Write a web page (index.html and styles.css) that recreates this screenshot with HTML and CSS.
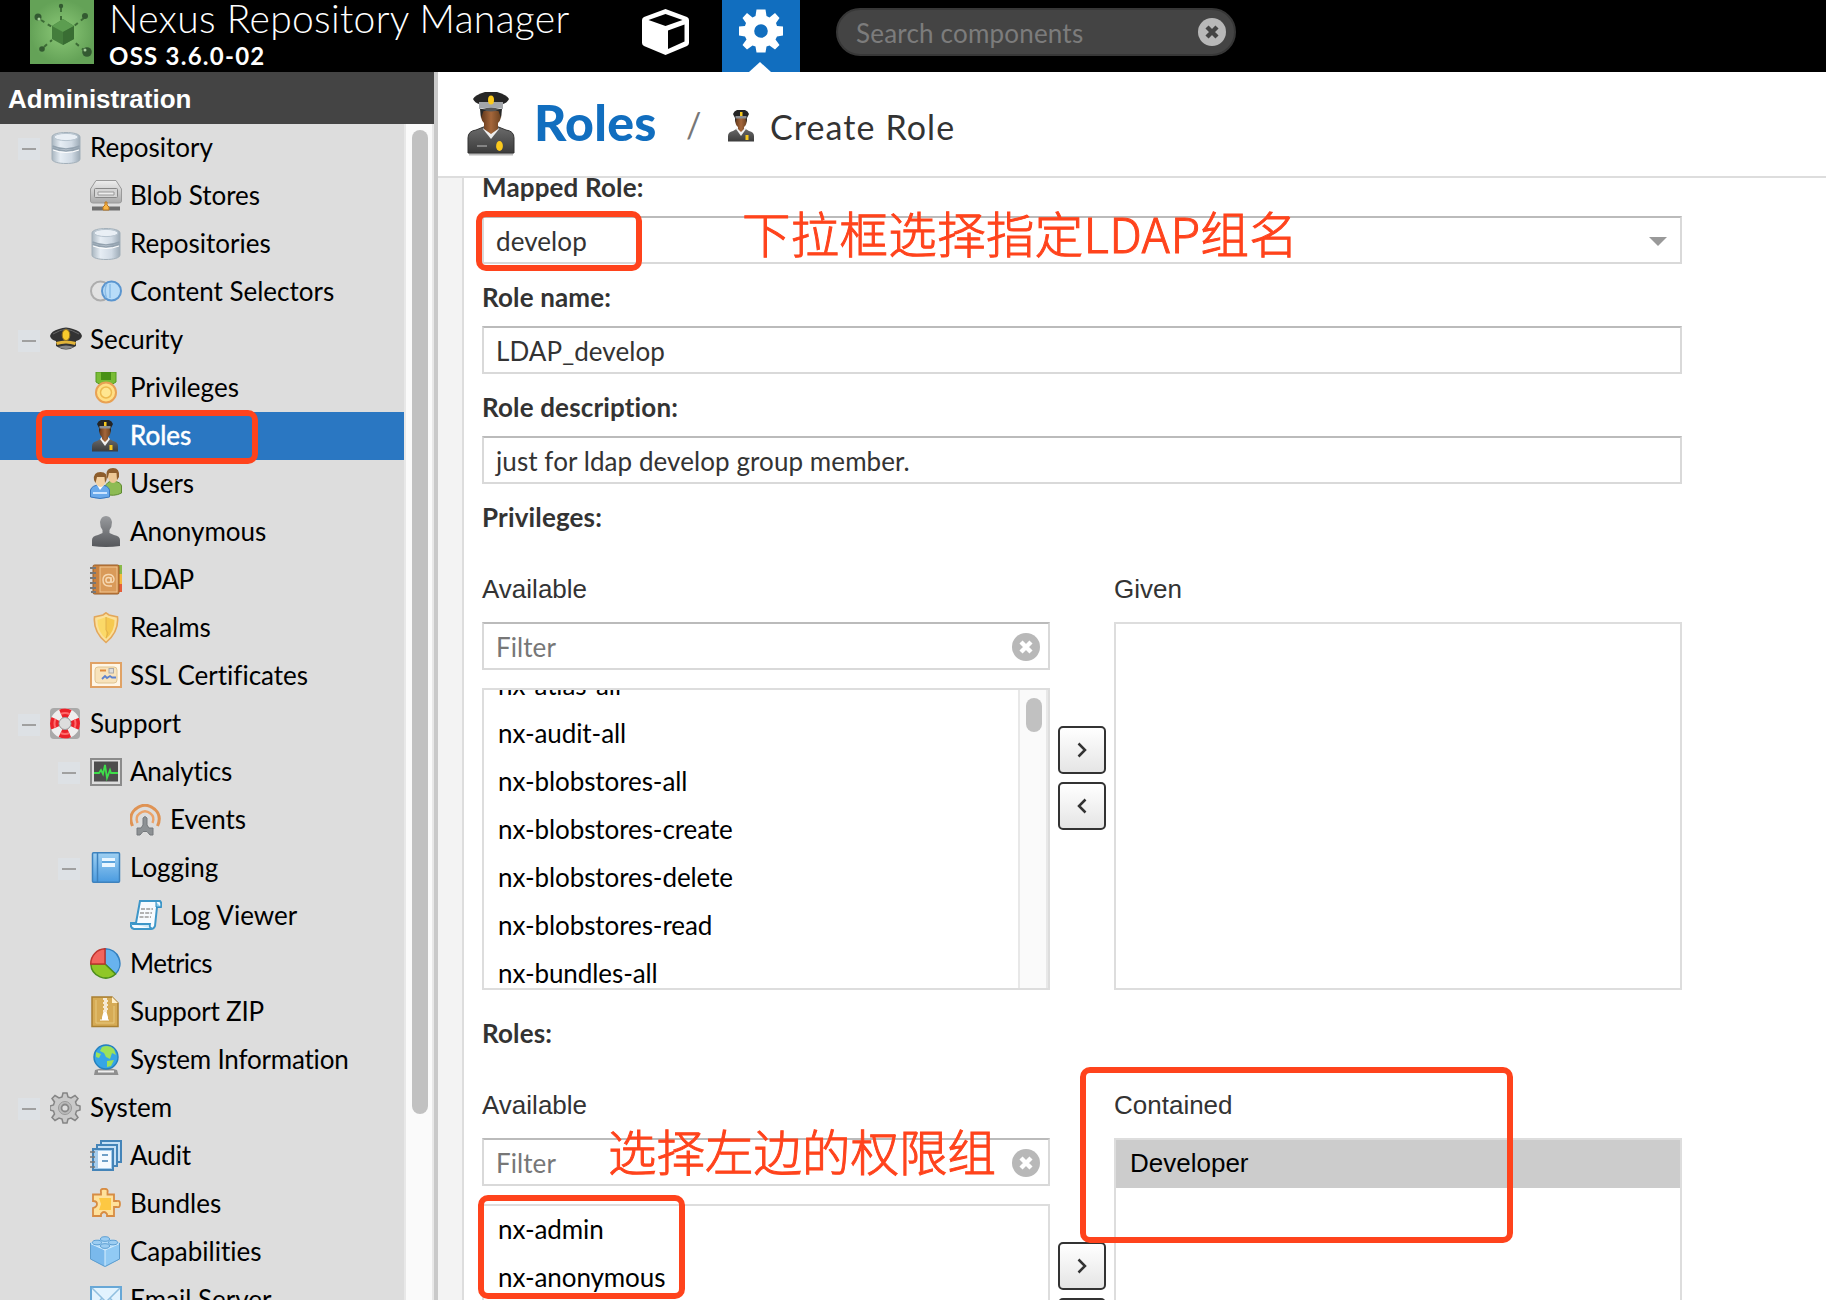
FILE: index.html
```html
<!DOCTYPE html>
<html lang="en">
<head>
<meta charset="utf-8">
<title>Nexus Repository Manager</title>
<link rel="stylesheet" href="styles.css">
</head>
<body>
<svg class="sprite" aria-hidden="true">
  <defs>
    <linearGradient id="g-steel" x1="0" x2="1"><stop offset="0" stop-color="#a9b6c0"/><stop offset=".3" stop-color="#e6edf4"/><stop offset=".7" stop-color="#d0dae4"/><stop offset="1" stop-color="#9dabb7"/></linearGradient>
    <linearGradient id="g-grey" x1="0" x2="0" y1="0" y2="1"><stop offset="0" stop-color="#eee"/><stop offset="1" stop-color="#a8a8a8"/></linearGradient>
    <linearGradient id="g-dark" x1="0" x2="0" y1="0" y2="1"><stop offset="0" stop-color="#999b9e"/><stop offset="1" stop-color="#55575b"/></linearGradient>
    <linearGradient id="g-blue" x1="0" x2="0" y1="0" y2="1"><stop offset="0" stop-color="#9fd0f2"/><stop offset="1" stop-color="#4a9be0"/></linearGradient>
    <radialGradient id="g-logo"><stop offset="0" stop-color="#8cc978"/><stop offset="1" stop-color="#64a257"/></radialGradient>
    <linearGradient id="g-skin" x1="0" x2="1"><stop offset="0" stop-color="#5e3519"/><stop offset=".5" stop-color="#a5673b"/><stop offset="1" stop-color="#68401f"/></linearGradient>
    <linearGradient id="g-coat" x1="0" x2="0" y1="0" y2="1"><stop offset="0" stop-color="#6c6c6c"/><stop offset="1" stop-color="#3c3c3c"/></linearGradient>
  </defs>
  <symbol id="i-db" viewBox="0 0 32 32">
    <path d="M2 5C2-1 30-1 30 5V27C30 33 2 33 2 27Z" fill="url(#g-steel)" stroke="#a2afb9"/>
    <path d="M2.500 14Q16 20 29.500 14M2.500 16Q16 22 29.500 16" fill="none" stroke="#93a2af" stroke-width="1.500"/>
    <path d="M3 18Q16 23 29 18" fill="none" stroke="#fff"/>
    <ellipse cx="16" cy="5" rx="12" ry="3.600" fill="#e9eff5" stroke="#b6c3ce"/>
  </symbol>
  <symbol id="i-blob" viewBox="0 0 32 32">
    <path d="M6 .5H26L31.500 9V21Q31.500 23 29 23H3Q.5 23 .5 21V9Z" fill="url(#g-grey)" stroke="#999"/>
    <rect x="4.500" y="8.500" width="23" height="9" rx="1" fill="#d5d5d5" stroke="#888"/>
    <path d="M8 12H24V15H8Z" fill="#eee" stroke="#999"/>
    <path d="M2 26.500H30V30.500H2Z" fill="#6f6f6f"/><path d="M13 30V27L15 25V22H17V25L19 27V30Z" fill="#f9b545" stroke="#b87620"/>
  </symbol>
  <symbol id="i-selectors" viewBox="0 0 32 32">
    <circle cx="10.500" cy="15" r="9.500" fill="#e2e2e2" stroke="#adadad" stroke-width="2"/>
    <circle cx="21.500" cy="15" r="9.500" fill="#b8dcf8" stroke="#5a95cf" stroke-width="2"/>
    <path d="M16.500 8Q14 15 16.500 22M20 8V22" fill="none" stroke="#8bbde7" stroke-width="1.500"/>
  </symbol>
  <symbol id="i-cap" viewBox="0 0 32 32">
    <path d="M0 12Q1 7 9 5Q16 2 23 5Q31 7 32 12Q31 16 26 17V22Q16 29 6 22V17Q1 16 0 12Z" fill="#333"/>
    <path d="M3 10Q10 6 16 5Q22 6 29 10" fill="none" stroke="#666"/>
    <path d="M6 18Q16 15 26 18L25 21Q16 18 7 21Z" fill="#e2b43a"/>
    <path d="M8 23Q16 20 24 23Q16 27 8 23Z" fill="#888"/>
    <ellipse cx="16" cy="11" rx="3.800" ry="5.500" fill="#f8cb2d" stroke="#9b761b"/>
  </symbol>
  <symbol id="i-medal" viewBox="0 0 32 32">
    <path d="M6 0H26V10L21 13H11L6 10Z" fill="#79bc35" stroke="#559920"/><path d="M11 0H21V8H11Z" fill="#489016"/>
    <circle cx="16" cy="20.500" r="10" fill="#ffdf85" stroke="#e8a153" stroke-width="2"/>
    <circle cx="16" cy="20.500" r="5.500" fill="#ffe690" stroke="#edb94f" stroke-width="1.500"/>
  </symbol>
  <symbol id="i-officer" viewBox="0 0 48 64">
    <path d="M2 62H46" stroke="#bbb" stroke-width="3"/>
    <path d="M1 61V46Q1 39 9 38L19 34H29L39 38Q47 39 47 46V61Z" fill="url(#g-coat)" stroke="#333"/>
    <path d="M16 37L24 47L32 37L28 34H20Z" fill="#eee"/>
    <path d="M14 18Q13 28 17 31V37L24 42L31 37V31Q35 28 34 18Z" fill="url(#g-skin)"/>
    <path d="M13 17H35L34 26L31.500 19H16.500L14 26Z" fill="#282828"/>
    <path d="M6 7Q8 3 18 0H30Q40 3 42 7Q40 11 36 12H12Q8 11 6 7Z" fill="#262626"/>
    <path d="M12 10H36V17Q24 14 12 17Z" fill="#a3a6aa"/><path d="M15 17Q24 14 33 17Q24 22 15 17Z" fill="#555"/>
    <ellipse cx="24" cy="8" rx="3" ry="4.500" fill="#fbc91c"/>
    <ellipse cx="32.500" cy="54" rx="3.400" ry="5" fill="#fbc91c"/><path d="M10 54H20" stroke="#999" stroke-width="1.500"/>
  </symbol>
  <symbol id="i-officer-s" viewBox="0 0 32 32">
    <path d="M2 31.500V26Q2 22 7 21L12 18H18L23 21Q28 22 28 26V31.500Z" fill="url(#g-coat)"/>
    <path d="M10 19L15 26L20 19L17 16H13Z" fill="#f1f1f1"/>
    <path d="M9 8Q9 15 12 17V19L15 22L18 19V17Q21 15 21 8Z" fill="url(#g-skin)"/>
    <path d="M7 4Q8 1 11 0H19Q22 1 23 4L21 8L20.500 13L19.500 8H10.500L9.500 13L9 8Z" fill="#242424"/>
    <path d="M9.500 6H20.500V8.500H9.500Z" fill="#8c8f93"/>
    <path d="M14 2H16.500V6H14ZM19.500 25H22.500V30H19.500Z" fill="#f5c71e"/>
  </symbol>
  <symbol id="i-users" viewBox="0 0 32 32">
    <path d="M15 26V19Q17 13 23 13Q31 14 31.500 18V25Q24 29 15 26Z" fill="#8dbb54" stroke="#5e8a2f"/>
    <ellipse cx="23" cy="8" rx="5" ry="7" fill="#eec895"/><path d="M16.500 7Q16 0 23 0Q30 0 29 9L27 12L26.500 5H19L17.500 11Z" fill="#8d5d2c"/>
    <path d="M.5 29V22Q2 17 10 17Q18 17 19.500 22V29Q10 32 .5 29Z" fill="#69a9eb" stroke="#3a77bd"/>
    <path d="M7 17L10 22L14 17Z" fill="#fff"/>
    <ellipse cx="10.500" cy="12" rx="5" ry="7" fill="#f4d2a3"/><path d="M4 12Q3 4 10.500 4Q18 4 16.500 12L15 15L14.500 9H7L5.500 15Z" fill="#8d5d2c"/>
    <path d="M3 25H17" stroke="#cce4ff" stroke-width="2"/>
  </symbol>
  <symbol id="i-anon" viewBox="0 0 32 32">
    <path d="M2 30V24Q2 20 8 19L12.500 17V14Q10 11 10 6Q11 0 16 0Q21 0 22 6Q22 11 19.500 14V17L24 19Q30 20 30 24V30Q16 32 2 30Z" fill="url(#g-dark)"/>
  </symbol>
  <symbol id="i-ldap" viewBox="0 0 32 32">
    <path d="M28 1H32V10H28Z" fill="#8aba4a"/><path d="M28 10H32V20H28Z" fill="#f4b93f"/><path d="M28 20H32V28H28Z" fill="#e65e3a"/>
    <rect x="3" y="1" width="26" height="29" rx="1.500" fill="#c98240" stroke="#985c26"/>
    <rect x="10" y="3" width="17" height="25" fill="#d99a59" stroke="#efc592"/>
    <path d="M0 4H6M0 9H6M0 14H6M0 19H6M0 24H6M1 28H6" stroke="#777" stroke-width="1.800"/>
    <circle cx="18.500" cy="16" r="2.600" fill="none" stroke="#f6d8b2" stroke-width="1.500"/>
    <path d="M21 13V18Q24 19 24 15Q23 10 18 10.500Q13 11 13 16Q13 22 19 22H22" fill="none" stroke="#f6d8b2" stroke-width="1.400"/>
  </symbol>
  <symbol id="i-shield" viewBox="0 0 32 32">
    <path d="M16 .8L19 3L27.500 5Q29 20 16 30.500Q3 20 4.500 5L13 3Z" fill="#fbe09a" stroke="#e3a75a" stroke-width="1.600"/>
    <path d="M16 5L24.500 8Q25 19 16 27Z" fill="#f6c94f"/><path d="M16 5L7.500 8Q7 19 16 27Z" fill="#fbd968"/><path d="M16 5V18L18 21L16 26" fill="none" stroke="#e0b04a"/>
  </symbol>
  <symbol id="i-cert" viewBox="0 0 32 32">
    <rect x="1" y="3" width="30" height="24" fill="#fff6e6" stroke="#e0a265" stroke-width="2"/>
    <rect x="5" y="7" width="22" height="16" rx="3" fill="#f8e3bb" stroke="#dfc492"/>
    <path d="M10 10.500H16" stroke="#e38c3e" stroke-width="2"/><rect x="19" y="8.500" width="4.500" height="4.500" fill="#ddd" stroke="#aaa"/>
    <path d="M12 19L15 16L17 18L20 16L22 17.500H26" fill="none" stroke="#5f82cd" stroke-width="1.800"/>
  </symbol>
  <symbol id="i-buoy" viewBox="0 0 32 32">
    <rect x="0" y="0" width="30" height="31" rx="4" fill="#a9a9a9"/>
    <circle cx="15" cy="15.500" r="10.500" fill="none" stroke="#eee" stroke-width="9"/>
    <circle cx="15" cy="15.500" r="10.500" fill="none" stroke="#ea2129" stroke-width="9" stroke-dasharray="9 7.490" stroke-dashoffset="4.500"/>
    <circle cx="15" cy="15.500" r="10.500" fill="none" stroke="#ff6b6b" stroke-width="2" stroke-dasharray="9 7.490" stroke-dashoffset="4.500"/>
    <circle cx="15" cy="15.500" r="6" fill="#ddd" stroke="#999"/>
  </symbol>
  <symbol id="i-monitor" viewBox="0 0 32 32">
    <rect x="1" y="3" width="30" height="26" fill="#ddd" stroke="#8b8b8b" stroke-width="2"/>
    <rect x="4" y="5.500" width="24" height="20" fill="#4d4d4d"/>
    <path d="M4 17H9L11 14L13 18L15 9L17 22L20 14L21 17H28" fill="none" stroke="#3ede4a" stroke-width="1.800"/>
  </symbol>
  <symbol id="i-antenna" viewBox="0 0 32 32">
    <path d="M2.500 22Q-2 12 5 5.500Q15-3 25 5.500Q32 12 27.500 22" fill="none" stroke="#df9354" stroke-width="3"/>
    <path d="M7.500 19Q5 13 9.500 9.500Q15 5 20.500 9.500Q25 13 22.500 19" fill="none" stroke="#eba369" stroke-width="2.400"/>
    <path d="M13 14Q15 11 17 14V21L19 24H23V31H20L17 27.500H13L10 31H7V24H11L13 21Z" fill="#8d9194" stroke="#75797c"/>
  </symbol>
  <symbol id="i-book" viewBox="0 0 32 32">
    <rect x="2.500" y=".8" width="27" height="29.500" rx="1" fill="url(#g-blue)" stroke="#3e82bd" stroke-width="1.500"/>
    <path d="M7.500 1V30" stroke="#3e82bd" stroke-width="1.500"/>
    <rect x="12" y="6" width="13" height="9" fill="#eaf6ff"/><path d="M12 10H25" stroke="#5da4dc" stroke-width="2"/>
  </symbol>
  <symbol id="i-scroll" viewBox="0 0 32 32">
    <path d="M10 1H30Q32 3 31 7H27L25 26Q24 29 21 29H4Q0 28 1 23H6Z" fill="#f7fbff" stroke="#3d96c8" stroke-width="2"/>
    <path d="M2 24H20Q19 28 22 28.500" fill="#cfeaf8" stroke="#3d96c8" stroke-width="1.800"/><path d="M26 2V7H31" fill="#8fd0f1" stroke="#2f88bb"/>
    <path d="M11 9H23M10 13H22M9.500 17H21" stroke="#9b9b9b" stroke-width="1.600" stroke-dasharray="4 1.200"/>
  </symbol>
  <symbol id="i-pie" viewBox="0 0 32 32">
    <path d="M15 16V.8A14.700 14.700 0 0 1 25.500 26Z" fill="#68b3ee" stroke="#317fbf" stroke-width="1.500"/>
    <path d="M15 16L25.500 26A14.700 14.700 0 0 1 .8 16Z" fill="#8fc727" stroke="#4c8d1c" stroke-width="1.500"/>
    <path d="M15 16H.8A14.700 14.700 0 0 1 15 .8Z" fill="#f2655e" stroke="#bd352e" stroke-width="1.500"/>
  </symbol>
  <symbol id="i-zip" viewBox="0 0 32 32">
    <path d="M2 1H22L28 7V30.500H2Z" fill="#d6ab55" stroke="#a97f30" stroke-width="1.500"/><path d="M22 1V7H28Z" fill="#fff0ca"/>
    <path d="M6 4V27H24V10" fill="none" stroke="#e6c87e"/>
    <path d="M13 3H17M14 5H18M13 7H17M14 9H18M13 11H17M14 13H18M13 15H17" stroke="#fff" stroke-width="1.500"/><path d="M13.500 16H16.500L18 21V24H12V21Z" fill="#fff"/><path d="M10 24H19" stroke="#fff"/>
  </symbol>
  <symbol id="i-globe" viewBox="0 0 32 32">
    <path d="M5 26Q16 22 27 26L28.500 31H4Z" fill="#8f8f8f"/><path d="M8 27.500H24" stroke="#eee" stroke-width="2"/>
    <circle cx="16" cy="13" r="12" fill="#36a5e6" stroke="#2580bd" stroke-width="1.400"/>
    <path d="M12 3Q19 0 24 5L26 11L22 9L20 15L16 13L14 9L10 7ZM17 17L24 16L21 22L17 23ZM6 8L11 10L9 14L6 13Z" fill="#9de158"/>
  </symbol>
  <symbol id="i-gear" viewBox="0 0 32 32">
    <path d="M13 1H17L18 5L21 6L25 3.500L28 6.500L25.500 10L26.500 13L30 14V18L26.500 19L25.500 22L28 25.500L25 28.500L21 26L18 27L17 31H13L12 27L9 26L5 28.500L2 25.500L4.500 22L3.500 19L0 18V14L3.500 13L4.500 10L2 6.500L5 3.500L9 6L12 5Z" fill="#c9c9c9" stroke="#858585" stroke-width="1.500"/>
    <circle cx="15" cy="16" r="6.500" fill="#bbb" stroke="#999"/><circle cx="15" cy="16" r="3.500" fill="#ddd" stroke="#888" stroke-width="1.800"/>
  </symbol>
  <symbol id="i-audit" viewBox="0 0 32 32">
    <path d="M11 1H31V22H11Z" fill="#c6e0f5" stroke="#4484b8" stroke-width="2"/>
    <path d="M7 5H27V26H7Z" fill="#c6e0f5" stroke="#4484b8" stroke-width="2"/>
    <path d="M3 9H23V30H3Z" fill="#a5ccec" stroke="#4484b8" stroke-width="2"/>
    <path d="M8 11H21V28H8Z" fill="#f5faff"/><path d="M12 15H18M12 21H18" stroke="#6f9fc7" stroke-width="2"/>
    <path d="M0 12H5M0 17H5M0 22H5M0 27H5" stroke="#777" stroke-width="1.600"/>
  </symbol>
  <symbol id="i-puzzle" viewBox="0 0 32 32">
    <path d="M3 6.500H11V4Q10 .8 14 .8Q18.500 .8 17.500 4V6.500H24V13H27Q30 12 30 16Q30 20 27 19H24V28H17V26Q14 22 11 26V28H3V20Q7 19 7 16Q7 13 3 13Z" fill="#ffe19b" stroke="#d78c43" stroke-width="1.800"/>
    <path d="M9 10H21V22H9L11 16Z" fill="#fdc843"/>
  </symbol>
  <symbol id="i-brick" viewBox="0 0 32 32">
    <path d="M0 7L15 2L30 7V23L15 31L0 23Z" fill="#7ab9ec"/><path d="M15 14L30 7V23L15 31Z" fill="#91caf4"/><path d="M0 7L15 1L30 7L15 14Z" fill="#b4dcf9"/>
    <path d="M15 14V31M.5 7.500L15 14L29.500 7.500" fill="none" stroke="#d6edfd"/><path d="M.5 7V23L15 30.500L29.500 23V7" fill="none" stroke="#5f9dcd"/>
    <g fill="#9ccdf2" stroke="#5d9fd3"><ellipse cx="15" cy="3" rx="4.500" ry="2.300"/><ellipse cx="7" cy="6.500" rx="4.500" ry="2.300"/><ellipse cx="23" cy="6.500" rx="4.500" ry="2.300"/><ellipse cx="15" cy="10" rx="4.500" ry="2.300"/></g>
  </symbol>
  <symbol id="i-mail" viewBox="0 0 32 32">
    <rect x="1" y="3" width="30" height="24" fill="#e2f3fe" stroke="#67a7d6" stroke-width="2"/><path d="M2 4L16 18L30 4M2 26L12 14M30 26L20 14" fill="none" stroke="#91bfdf" stroke-width="1.500"/>
  </symbol>
  <symbol id="i-clear" viewBox="0 0 28 28">
    <circle cx="14" cy="14" r="14" fill="currentColor"/><path d="M9 9L19 19M19 9L9 19" stroke="var(--cross)" stroke-width="4.400"/>
  </symbol>
</svg>

<div class="app">
  <header class="topbar">
    <svg class="logo" viewBox="0 0 64 64"><rect width="64" height="64" fill="url(#g-logo)"/>
      <path d="M31 8V20M11 20L22 27M54 18L43 27M14 47L22 40M55 51L43 41" stroke="#3d6c36" stroke-width="2" stroke-dasharray="4 4"/>
      <path d="M33 19L44 26V39L33 45L22 39V26Z" fill="#447d3c"/><path d="M33 19L44 26L33 32L22 26Z" fill="#5c9d50"/><path d="M33 32L44 26V39L33 45Z" fill="#396d33"/>
      <g fill="#335a31"><circle cx="8" cy="17" r="3.500"/><circle cx="55" cy="16" r="3"/><circle cx="12" cy="49" r="2.800"/><circle cx="57" cy="52" r="4.800"/><circle cx="31" cy="6" r="2.200"/></g>
      <g fill="#a7cf9c"><circle cx="9" cy="19" r="1.500"/><circle cx="55" cy="50" r="1.500"/></g>
    </svg>
    <div class="brand"><div class="brand-name">Nexus Repository Manager</div><div class="brand-version">OSS 3.6.0-02</div></div>
    <a class="mode"><svg class="mode-cube" viewBox="0 0 47 46"><path d="M23.500 0L45 8Q47 9 47 11V34Q47 36 45 37L23.500 46L2 37Q0 36 0 34V11Q0 9 2 8Z" fill="#fff"/><path d="M6.500 11L23.500 5L40.500 11L23.500 17Z" fill="#000"/><path d="M26 21.500L42.500 15.500V32.500L26 40Z" fill="#000"/></svg></a>
    <a class="mode mode-active"><svg class="mode-gear" viewBox="-22 -22 44 44"><path fill="#fff" fill-rule="evenodd" d="M-4.500-21.500H4.500L5.500-15L8.500-13.500L14-18L18.500-13L15-8L16-5L22-4.500V4.500L16 5.500L14.500 8.500L18.500 14L14 18.500L8.500 14.500L5.500 15.500L4.500 21.500H-4.500L-5.500 15.500L-8.500 14.500L-14 18.500L-18.500 14L-14.500 8.500L-16 5.500L-22 4.500V-4.500L-16-5L-15-8L-18.500-13L-14-18L-8.500-13.500L-5.500-15ZM0-6.800A6.800 6.800 0 1 0 0 6.800A6.800 6.800 0 1 0 0-6.800Z"/></svg></a>
    <div class="search"><span>Search components</span><svg class="clear"><use href="#i-clear"/></svg></div>
  </header>

  <div class="body">
    <aside class="sidebar">
      <div class="sidebar-title">Administration</div>
      <div class="sidebar-main">
        <nav class="tree">
          <div class="node"><i class="toggle"></i><svg><use href="#i-db"/></svg><span>Repository</span></div>
          <div class="node l2"><svg><use href="#i-blob"/></svg><span>Blob Stores</span></div>
          <div class="node l2"><svg><use href="#i-db"/></svg><span>Repositories</span></div>
          <div class="node l2"><svg><use href="#i-selectors"/></svg><span>Content Selectors</span></div>
          <div class="node"><i class="toggle"></i><svg><use href="#i-cap"/></svg><span>Security</span></div>
          <div class="node l2"><svg><use href="#i-medal"/></svg><span>Privileges</span></div>
          <div class="node l2 selected"><svg><use href="#i-officer-s"/></svg><span>Roles</span></div>
          <div class="node l2"><svg><use href="#i-users"/></svg><span>Users</span></div>
          <div class="node l2"><svg><use href="#i-anon"/></svg><span>Anonymous</span></div>
          <div class="node l2"><svg><use href="#i-ldap"/></svg><span class="tighter">LDAP</span></div>
          <div class="node l2"><svg><use href="#i-shield"/></svg><span>Realms</span></div>
          <div class="node l2"><svg><use href="#i-cert"/></svg><span>SSL Certificates</span></div>
          <div class="node"><i class="toggle"></i><svg><use href="#i-buoy"/></svg><span>Support</span></div>
          <div class="node l2"><i class="toggle"></i><svg><use href="#i-monitor"/></svg><span class="tight">Analytics</span></div>
          <div class="node l3"><svg><use href="#i-antenna"/></svg><span>Events</span></div>
          <div class="node l2"><i class="toggle"></i><svg><use href="#i-book"/></svg><span>Logging</span></div>
          <div class="node l3"><svg><use href="#i-scroll"/></svg><span>Log Viewer</span></div>
          <div class="node l2"><svg><use href="#i-pie"/></svg><span class="tighter">Metrics</span></div>
          <div class="node l2"><svg><use href="#i-zip"/></svg><span class="tight">Support ZIP</span></div>
          <div class="node l2"><svg><use href="#i-globe"/></svg><span class="tight">System Information</span></div>
          <div class="node"><i class="toggle"></i><svg><use href="#i-gear"/></svg><span>System</span></div>
          <div class="node l2"><svg><use href="#i-audit"/></svg><span class="tight">Audit</span></div>
          <div class="node l2"><svg><use href="#i-puzzle"/></svg><span>Bundles</span></div>
          <div class="node l2"><svg><use href="#i-brick"/></svg><span>Capabilities</span></div>
          <div class="node l2"><svg><use href="#i-mail"/></svg><span>Email Server</span></div>
        </nav>
        <div class="scrollbar"><div class="thumb"></div></div>
      </div>
    </aside>
    <div class="splitter"></div>

    <main class="content">
      <div class="crumbs">
        <svg class="crumb-icon"><use href="#i-officer"/></svg>
        <h1>Roles</h1><span class="slash">/</span>
        <svg class="crumb-icon-s"><use href="#i-officer-s"/></svg><span class="crumb">Create Role</span>
      </div>
      <div class="form-area">
        <form class="form">
          <div class="field"><label>Mapped Role:</label><div class="input">develop<i class="arrow"></i></div></div>
          <div class="field"><label>Role name:</label><div class="input">LDAP_develop</div></div>
          <div class="field"><label>Role description:</label><div class="input">just for ldap develop group member.</div></div>
          <section class="picker">
            <label>Privileges:</label>
            <div class="columns">
              <div class="col"><div class="col-title">Available</div>
                <div class="input filter">Filter<svg class="clear"><use href="#i-clear"/></svg></div>
                <div class="list with-bar">
                  <div class="items scrolled"><div>nx-atlas-all</div><div>nx-audit-all</div><div>nx-blobstores-all</div><div>nx-blobstores-create</div><div>nx-blobstores-delete</div><div>nx-blobstores-read</div><div>nx-bundles-all</div></div>
                  <div class="list-bar"><div class="list-thumb"></div></div>
                </div></div>
              <div class="moves"><b><svg viewBox="0 0 10 16"><path d="M1.500 1.500L8 8L1.500 14.500"/></svg></b><b><svg viewBox="0 0 10 16"><path d="M8.500 1.500L2 8L8.500 14.500"/></svg></b></div>
              <div class="col"><div class="col-title">Given</div><div class="list tall"></div></div>
            </div>
          </section>
          <section class="picker">
            <label>Roles:</label>
            <div class="columns">
              <div class="col"><div class="col-title">Available</div>
                <div class="input filter">Filter<svg class="clear"><use href="#i-clear"/></svg></div>
                <div class="list"><div class="items"><div>nx-admin</div><div>nx-anonymous</div></div></div></div>
              <div class="moves"><b><svg viewBox="0 0 10 16"><path d="M1.500 1.500L8 8L1.500 14.500"/></svg></b><b><svg viewBox="0 0 10 16"><path d="M8.500 1.500L2 8L8.500 14.500"/></svg></b></div>
              <div class="col"><div class="col-title">Contained</div><div class="list tall"><div class="picked">Developer</div></div></div>
            </div>
          </section>
        </form>
      </div>
    </main>
  </div>

  <div class="mark mark-nav"></div>
  <div class="mark mark-mapped"></div>
  <div class="mark mark-available"></div>
  <div class="mark mark-contained"></div>
  <div class="note note-mapped">下拉框选择指定LDAP组名</div>
  <div class="note note-roles">选择左边的权限组</div>
</div>
</body>
</html>
```
FILE: styles.css
```css
* { box-sizing: border-box; }
body { margin: 0; font: 26px/32px Lato, sans-serif; color: #333; font-variant-ligatures: none; }
.sprite { position: absolute; width: 0; height: 0; }
.app { position: relative; width: 1826px; height: 1300px; overflow: hidden; display: flex; flex-direction: column; background: #fff; white-space: nowrap; }

.topbar { flex: none; height: 72px; background: #000; color: #fff; display: flex; align-items: flex-start; padding-left: 30px; }
.logo { width: 64px; height: 64px; }
.brand { width: 531px; padding-left: 15px; }
.brand-name { font-size: 39px; font-weight: 300; line-height: 36px; letter-spacing: .32px; }
.brand-version { font-size: 24px; font-weight: 700; line-height: 40px; letter-spacing: 1.25px; }
.mode { width: 80px; height: 72px; display: flex; justify-content: center; margin-right: 17px; }
.mode-cube { width: 47px; height: 46px; margin-top: 9px; }
.mode-active { position: relative; width: 78px; background: #116ebf; margin-right: 36px; }
.mode-active::after { content: ""; position: absolute; left: 27px; bottom: 0; border: 11px solid transparent; border-top: 0; border-bottom: 10px solid #fff; }
.mode-gear { width: 44px; height: 44px; margin-top: 9px; margin-right: 0; }
.search { width: 400px; height: 48px; margin-top: 8px; border: 2px solid #373737; border-radius: 24px; background: #444; color: #7c7c7c; display: flex; align-items: center; justify-content: space-between; padding: 0 8px 0 18px; letter-spacing: .2px; }
.search span { padding-top: 2px; }
.clear { width: 28px; height: 28px; color: #b8b8b8; --cross: #fff; }
.search .clear { --cross: #444; }

.body { flex: 1; min-height: 0; display: flex; }
.sidebar { width: 434px; display: flex; flex-direction: column; }
.sidebar-title { flex: none; height: 52px; background: #444; color: #fff; font: bold 26px/54px "Liberation Sans", sans-serif; padding-left: 8px; }
.sidebar-main { flex: 1; min-height: 0; display: flex; }
.tree { width: 404px; overflow: hidden; background: #ddd; color: #000; }
.node { height: 48px; display: flex; align-items: center; padding-left: 50px; position: relative; }
.node svg { width: 32px; height: 32px; margin-right: 8px; }
.node span { margin-top: -2px; }
.node.l2 { padding-left: 90px; }
.node.l3 { padding-left: 130px; }
.node.selected { background: #2a77c2; color: #fff; -webkit-text-stroke: .5px #fff; }
.tight { letter-spacing: -.2px; }
.tighter { letter-spacing: -.6px; }
.toggle { width: 22px; height: 22px; margin: 2px 10px 0 -32px; background: #dde1e5; display: flex; align-items: center; justify-content: center; }
.toggle::before { content: ""; width: 14px; height: 2px; background: #a0a0a0; }
.scrollbar { width: 30px; background: #fafafa; border: solid #e8e8e8; border-width: 0 2px; padding: 6px 0 0 6px; }
.thumb { width: 16px; height: 984px; border-radius: 8px; background: #c1c1c1; }
.splitter { width: 4px; background: #c9c9c9; }

.content { flex: 1; display: flex; flex-direction: column; min-width: 0; }
.crumbs { flex: none; height: 106px; border-bottom: 2px solid #ddd; display: flex; align-items: flex-start; padding: 20px 0 0 29px; }
.crumb-icon { width: 48px; height: 64px; }
h1 { margin: 0 0 0 19px; width: 132px; font-size: 50px; font-weight: 900; line-height: 60px; color: #116ebf; letter-spacing: .3px; }
.slash { margin-left: 20px; width: 40px; color: #777; font-size: 34px; line-height: 66px; }
.crumb-icon-s { width: 32px; height: 32px; margin-top: 18px; }
.crumb { margin-left: 12px; font-size: 34px; line-height: 70px; letter-spacing: 1.1px; }
.form-area { flex: 1; min-height: 0; overflow: hidden; padding-left: 24px; background: #f3f3f3; }
.form { display: flow-root; height: 100%; background: #fff; border-left: 2px solid #ddd; padding-left: 18px; }
.field { width: 1200px; height: 110px; }
.field:first-child { margin-top: -6px; }
label { display: block; font-weight: 700; height: 44px; line-height: 30px; letter-spacing: .15px; }
.input { height: 48px; border: 2px solid #d9d9d9; border-top-color: #bbb; padding: 2px 12px 0; line-height: 44px; display: flex; justify-content: space-between; align-items: center; background: #fff; letter-spacing: .08px; }
.arrow { border: 9px solid transparent; border-top-color: #999; border-bottom: 0; margin-right: 1px; }
.picker { height: 516px; }
.picker label { height: 69px; }
.columns { display: flex; width: 1200px; }
.col { width: 568px; }
.col-title { height: 51px; padding-top: 2px; font: 26px/32px "Liberation Sans", sans-serif; }
.filter { color: #777; padding-right: 8px; }
.list { margin-top: 18px; height: 302px; border: 2px solid #ddd; display: flex; overflow: hidden; color: #000; background: #fff; }
.list.tall { margin-top: 0; height: 368px; }
.items { flex: 1; padding-left: 14px; margin-top: -1px; line-height: 48px; letter-spacing: -.08px; }
.items.scrolled { margin-top: -29px; }
.list-bar { width: 30px; background: #fafafa; border: solid #e8e8e8; border-width: 0 2px; padding: 8px 0 0 6px; }
.list-thumb { width: 16px; height: 34px; border-radius: 8px; background: #c1c1c1; }
.moves { width: 64px; padding: 155px 8px 0; display: grid; gap: 8px; align-content: start; }
.moves b { height: 48px; border: 2px solid #333; border-radius: 5px; background: linear-gradient(#fff, #e5e5e5); display: flex; align-items: center; justify-content: center; }
.moves svg { width: 10px; height: 16px; fill: none; stroke: #333; stroke-width: 2.500; }
.picked { flex: 1; height: 48px; padding-left: 14px; background: #ccc; font: 26px/47px "Liberation Sans", sans-serif; }

.mark { position: absolute; border: 6px solid #ff431c; border-radius: 10px; }
.mark-nav { left: 36px; top: 410px; width: 222px; height: 54px; }
.mark-mapped { left: 476px; top: 211px; width: 166px; height: 60px; }
.mark-available { left: 478px; top: 1195px; width: 207px; height: 104px; }
.mark-contained { left: 1080px; top: 1067px; width: 433px; height: 176px; }
.note { position: absolute; color: #ff431c; font: 300 48.400px/60px "Noto Sans CJK SC", sans-serif; -webkit-text-stroke: 1px #ff431c; }
.note-mapped { left: 742px; top: 202px; letter-spacing: .4px; }
.note-roles { left: 608px; top: 1120px; letter-spacing: .1px; }
```
